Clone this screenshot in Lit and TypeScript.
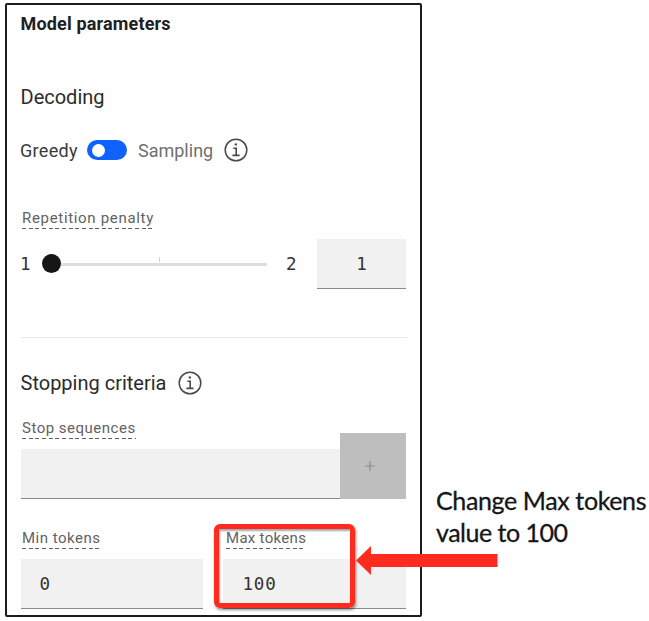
import { LitElement, html, css } from "lit";
import { customElement } from "lit/decorators.js";

const info = html`<svg class="info" viewBox="0 0 24 24" width="24" height="24">
  <circle cx="12" cy="12" r="10.8" fill="none" stroke="#4a4a4a" stroke-width="1.5"></circle>
  <path d="M9.3 10.2H12.2V17.2M8.4 17.4H15.6" fill="none" stroke="#4a4a4a" stroke-width="1.6"></path>
  <circle cx="11.8" cy="6.4" r="1.2" fill="#4a4a4a"></circle>
</svg>`;

@customElement("app-root")
export class AppRoot extends LitElement {
  static styles = css`
    :host {
      display: block;
      position: relative;
      width: 649px;
      height: 621px;
      overflow: hidden;
      background: #fff;
      font-family: Roboto, "Noto Sans", sans-serif;
      color: #2b2b2b;
    }
    * { box-sizing: border-box; }
    .page { display: flex; align-items: flex-start; padding: 3px 0 0 5px; }
    .panel {
      width: 417px;
      height: 614px;
      flex: none;
      border: 2px solid #1c1c1c;
      border-radius: 2px;
      padding: 0 13px 0 14px;
      display: flex;
      flex-direction: column;
    }
    .title { margin-top: 7px; height: 24px; line-height: 24px; font-size: 18px; font-weight: 700; letter-spacing: 0.16px; color: #202020; white-space: nowrap; margin-left: -0.5px; }
    .heading { height: 28px; line-height: 28px; font-size: 20px; white-space: nowrap; display: flex; align-items: center; margin-left: -0.5px; }
    .decoding { margin-top: 47px; }
    .mode { margin-top: 25px; height: 28px; display: flex; align-items: center; font-size: 18px; white-space: nowrap; margin-left: -1px; }
    .greedy { flex: none; width: 67px; color: #3a3a3a; letter-spacing: 0.3px; }
    .toggle { flex: none; width: 40px; height: 20px; border-radius: 10px; background: #0f62fe; padding: 3.5px 5px; }
    .knob { width: 13px; height: 13px; border-radius: 50%; background: #fff; }
    .sampling { flex: none; width: 96.500px; padding-left: 11px; color: #6f6f6f; letter-spacing: 0; }
    .info { display: block; flex: none; }
    .label {
      display: block;
      position: relative;
      width: max-content;
      margin-left: 1px;
      height: 21px;
      line-height: 21px;
      font-size: 15px;
      color: #626262;
      white-space: nowrap;
    }
    .dash {
      position: absolute;
      left: 0;
      right: 0;
      bottom: 0;
      height: 1.5px;
      background: repeating-linear-gradient(90deg, #606060 0 4px, transparent 4px 6.65px);
    }
    .penalty { margin-top: 44px; letter-spacing: 0.68px; }
    .slider { margin-top: 10px; height: 50px; display: flex; align-items: center; }
    .num { font-family: "DejaVu Sans Mono", monospace; font-size: 17.5px; letter-spacing: 0.8px; color: #333; }
    .low { width: 31px; margin-left: -1px; }
    .track { width: 216px; height: 20px; display: flex; align-items: center; position: relative; }
    .rail { width: 100%; height: 3px; background: #dcdcdc; }
    .thumb { position: absolute; left: -9px; top: 0; width: 19px; height: 19px; border-radius: 50%; background: #161616; }
    .tick { position: absolute; left: 108px; top: 3px; width: 1px; height: 5px; background: #cfcfcf; }
    .high { width: 50px; padding-left: 19px; }
    .field {
      height: 50px;
      background: #f1f1f1;
      border-bottom: 1.5px solid #8a8a8a;
      display: flex;
      align-items: center;
    }
    .value { width: 89px; justify-content: center; padding-left: 1px; }
    .divider { margin-top: 48px; height: 1px; background: #e6e6e6; flex: none; }
    .stopping { margin-top: 31px; }
    .stopping .info { margin-left: 12px; }
    .sequence { margin-top: 21px; height: 81px; display: flex; align-items: flex-end; }
    .seqbox { flex: none; width: 319px; height: 81px; }
    .seqlabel { letter-spacing: 0.5px; }
    .seqbox .field { margin-top: 10px; }
    .add { width: 66px; height: 66px; background: #bebebe; display: flex; align-items: center; justify-content: center; padding-right: 6px; padding-bottom: 1px; }
    .tokens { margin-top: 29px; display: grid; grid-template-columns: 182px 183px; column-gap: 20px; }
    .tokens .label { letter-spacing: 0.5px; }
    .tokens .maxcol .label { margin-left: 3px; letter-spacing: 0.3px; }
    .tokens .field { margin-top: 10px; padding-left: 18.5px; }
    .tokens .maxcol .field { padding-left: 19.5px; }
    .note {
      margin: 480.5px 0 0 14px;
      font-family: Lato, sans-serif;
      font-size: 25px;
      line-height: 32px;
      color: #161616;
      letter-spacing: -0.38px;
      -webkit-text-stroke: 0.3px #161616;
      white-space: nowrap;
    }
    .line1, .line2 { display: block; width: max-content; }
    .line2 { letter-spacing: -0.5px; }
    .callout {
      position: absolute;
      left: 214px;
      top: 524px;
      width: 141px;
      height: 84px;
      border: 5px solid #ff2b1f;
      border-radius: 6px;
      box-shadow: 1px 2px 3px rgba(0, 0, 0, 0.45), inset 1px 2px 2px rgba(0, 0, 0, 0.35);
    }
    .arrow { position: absolute; left: 356px; top: 545px; }
  `;

  render() {
    return html`
      <div class="page">
        <section class="panel">
          <div class="title"><span>Model parameters</span></div>
          <div class="heading decoding"><span>Decoding</span></div>
          <div class="mode">
            <span class="greedy">Greedy</span>
            <div class="toggle"><div class="knob"></div></div>
            <span class="sampling">Sampling</span>
            ${info}
          </div>
          <span class="label penalty">Repetition penalty<i class="dash"></i></span>
          <div class="slider">
            <span class="num low">1</span>
            <div class="track">
              <div class="rail"></div>
              <div class="tick"></div>
              <div class="thumb"></div>
            </div>
            <span class="num high">2</span>
            <div class="field value num">1</div>
          </div>
          <div class="divider"></div>
          <div class="heading stopping"><span>Stopping criteria</span>${info}</div>
          <div class="sequence">
            <div class="seqbox">
              <span class="label seqlabel">Stop sequences<i class="dash"></i></span>
              <div class="field"></div>
            </div>
            <div class="add">
              <svg width="12" height="12" viewBox="0 0 12 12">
                <path d="M6 1V11M1 6H11" stroke="#8d8d8d" stroke-width="1.2"></path>
              </svg>
            </div>
          </div>
          <div class="tokens">
            <div>
              <span class="label">Min tokens<i class="dash"></i></span>
              <div class="field num">0</div>
            </div>
            <div class="maxcol">
              <span class="label">Max tokens<i class="dash"></i></span>
              <div class="field num">100</div>
            </div>
          </div>
        </section>
        <div class="note">
          <span class="line1">Change Max tokens</span>
          <span class="line2">value to 100</span>
        </div>
      </div>
      <div class="callout"></div>
      <svg class="arrow" width="142" height="31" viewBox="0 0 142 31">
        <path d="M0 15.5L15 1V9H141.500V22H15V30Z" fill="#ff2b1f"></path>
      </svg>
    `;
  }
}
